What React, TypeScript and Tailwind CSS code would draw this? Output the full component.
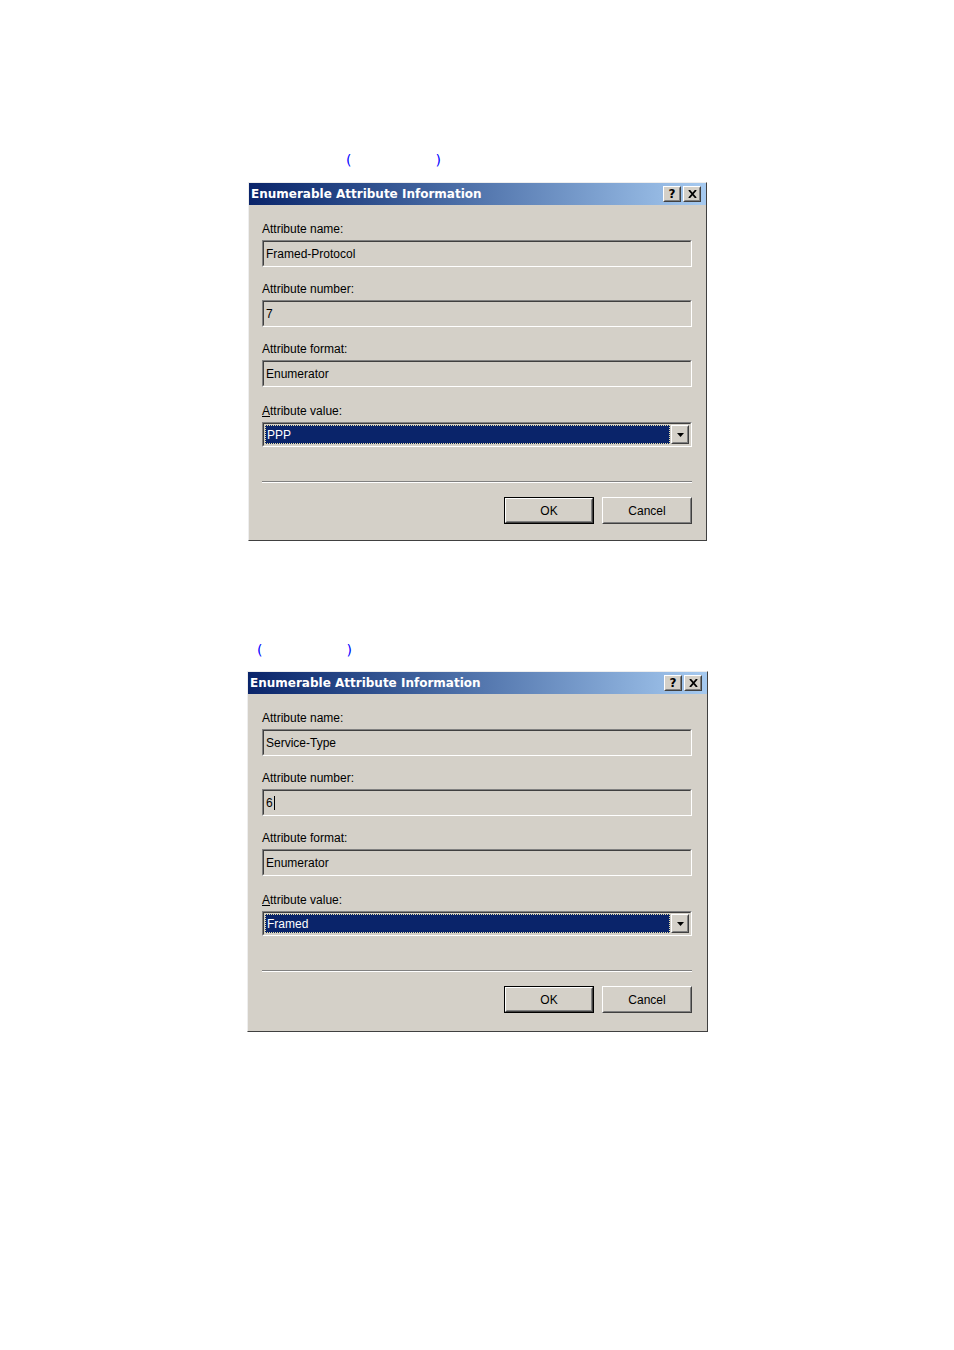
const ui = { fontFamily: '"Liberation Sans", Arial, sans-serif' };

function Sunken({ children, h }: { children: React.ReactNode; h: string }) {
  return (
    <div className={`${h} border border-t-[#808080] border-l-[#808080] border-b-white border-r-white`}>
      <div className="h-full border border-t-[#404040] border-l-[#404040] border-b-[#d4d0c8] border-r-[#d4d0c8] bg-[#d4d0c8]">
        {children}
      </div>
    </div>
  );
}

function Field({ label, value, caret }: { label: React.ReactNode; value: string; caret?: boolean }) {
  return (
    <div className="h-[60px] pt-[1px]">
      <div className="h-[14px] text-[12px] leading-[14px] text-black">{label}</div>
      <div className="mt-[4px]">
        <Sunken h="h-[27px]">
          <div className="flex h-full items-center pl-[2px] text-[12px] leading-[14px] text-black">
            <span>{value}</span>
            {caret && <span className="ml-[1px] h-[14px] w-[1px] bg-black" />}
          </div>
        </Sunken>
      </div>
    </div>
  );
}

function Raised({ children, className, isDefault }: { children: React.ReactNode; className: string; isDefault?: boolean }) {
  const inner = (
    <div className="h-full border border-t-white border-l-white border-b-[#404040] border-r-[#404040]">
      <div className="flex h-full items-center justify-center border border-t-[#d4d0c8] border-l-[#d4d0c8] border-b-[#808080] border-r-[#808080] bg-[#d4d0c8]">
        {children}
      </div>
    </div>
  );
  return isDefault ? (
    <div className={`${className} border border-black`}>{inner}</div>
  ) : (
    <div className={className}>{inner}</div>
  );
}

function TitleButton({ children }: { children: React.ReactNode }) {
  return (
    <Raised className="h-[16px] w-[18px]">
      <span className="text-[12px] font-bold leading-none text-black" style={{ fontFamily: '"DejaVu Sans", sans-serif' }}>
        {children}
      </span>
    </Raised>
  );
}

function Dialog({
  name,
  number,
  value,
  caret,
  w,
  h,
  px,
}: {
  name: string;
  number: string;
  value: string;
  caret?: boolean;
  w: string;
  h: string;
  px: string;
}) {
  return (
    <div className={`${w} ${h} border border-t-[#eeeeee] border-l-[#eeeeee] border-b-[#404040] border-r-[#404040] bg-[#d4d0c8]`} style={ui}>
      <div className="flex h-[22px] items-center justify-between bg-gradient-to-r from-[#0a246a] to-[#a6caf0] pl-[2px] pr-[5px]">
        <span className="text-[12px] font-bold text-white" style={{ fontFamily: '"DejaVu Sans", Verdana, sans-serif' }}>
          Enumerable Attribute Information
        </span>
        <div className="flex gap-[2px]">
          <TitleButton>?</TitleButton>
          <TitleButton>
            <svg width="9" height="8" viewBox="0 0 9 8">
              <path d="M1 0 L8 8 M8 0 L1 8" stroke="black" strokeWidth="1.8" fill="none" />
            </svg>
          </TitleButton>
        </div>
      </div>
      <div className={`${px} pt-[16px]`}>
        <Field label="Attribute name:" value={name} />
        <Field label="Attribute number:" value={number} caret={caret} />
        <Field label="Attribute format:" value="Enumerator" />
        <div className="pt-[3px]">
          <div className="h-[14px] text-[12px] leading-[14px] text-black">
            <span className="underline">A</span>ttribute value:
          </div>
          <div className="mt-[4px]">
            <Sunken h="h-[25px]">
              <div className="flex h-full items-center gap-[1px] p-[1px]">
                <div className="flex h-full flex-1 items-center border border-dotted border-[#e8e0a8] bg-[#0a246a] pl-[1px] text-[12px] leading-[14px] text-white">
                  {value}
                </div>
                <Raised className="h-full w-[18px]">
                  <svg width="7" height="4" viewBox="0 0 7 4">
                    <path d="M0 0 H7 L3.5 4 Z" fill="black" />
                  </svg>
                </Raised>
              </div>
            </Sunken>
          </div>
        </div>
        <div className="mt-[34px] h-[2px] border-t border-t-[#808080] border-b border-b-white" />
        <div className="mt-[14px] flex justify-end gap-[8px]">
          <Raised className="h-[27px] w-[90px]" isDefault>
            <span className="text-[12px] text-black">OK</span>
          </Raised>
          <Raised className="h-[27px] w-[90px]">
            <span className="text-[12px] text-black">Cancel</span>
          </Raised>
        </div>
      </div>
    </div>
  );
}

function Parens({ indent, gap }: { indent: string; gap: string }) {
  return (
    <div className={`flex h-[20px] items-center ${indent} text-[14px] text-[#0000ff]`} style={{ fontFamily: '"DejaVu Sans", sans-serif' }}>
      <span>(</span>
      <span className={gap} />
      <span>)</span>
    </div>
  );
}

export default function App() {
  return (
    <div className="min-h-[1350px] w-[954px] bg-white">
      <div className="pl-[248px] pt-[150px]">
        <Parens indent="pl-[98px]" gap="w-[84px]" />
        <div className="mt-[12px]">
          <Dialog name="Framed-Protocol" number="7" value="PPP" w="w-[459px]" h="h-[359px]" px="pl-[13px] pr-[14px]" />
        </div>
      </div>
      <div className="pl-[247px] pt-[99px]">
        <Parens indent="pl-[10px]" gap="w-[84px]" />
        <div className="mt-[11px]">
          <Dialog name="Service-Type" number="6" value="Framed" caret w="w-[461px]" h="h-[361px]" px="pl-[14px] pr-[15px]" />
        </div>
      </div>
    </div>
  );
}
